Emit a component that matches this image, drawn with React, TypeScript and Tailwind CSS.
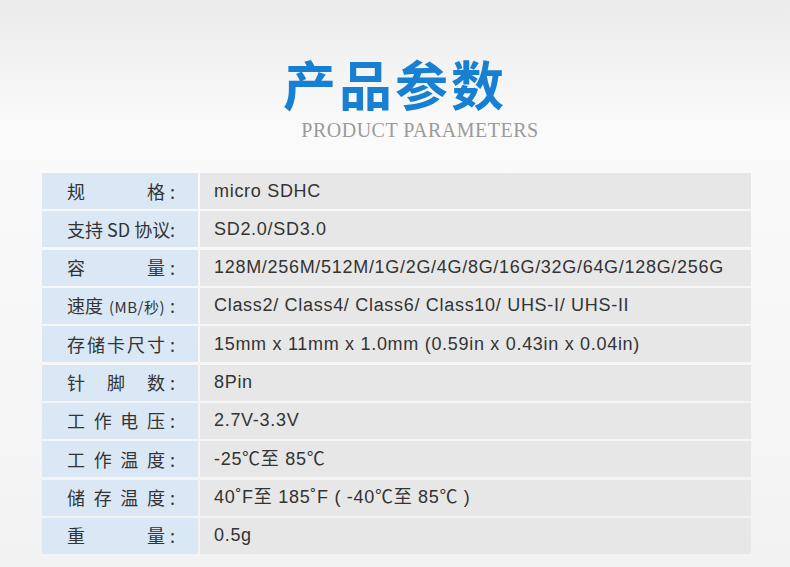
import React from 'react';

const rows: { label: React.ReactNode[]; value: string }[] = [
  { label: ['规', '格'], value: 'micro SDHC' },
  { label: ['支持 SD 协议'], value: 'SD2.0/SD3.0' },
  { label: ['容', '量'], value: '128M/256M/512M/1G/2G/4G/8G/16G/32G/64G/128G/256G' },
  {
    label: ['速度', <span key="s" className="text-[15px] tracking-[0.5px]">(MB/秒)</span>],
    value: 'Class2/ Class4/ Class6/ Class10/ UHS-I/ UHS-II',
  },
  { label: ['存', '储', '卡', '尺', '寸'], value: '15mm x 11mm x 1.0mm (0.59in x 0.43in x 0.04in)' },
  { label: ['针', '脚', '数'], value: '8Pin' },
  { label: ['工', '作', '电', '压'], value: '2.7V-3.3V' },
  { label: ['工', '作', '温', '度'], value: '-25℃至 85℃' },
  { label: ['储', '存', '温', '度'], value: '40˚F至 185˚F ( -40℃至 85℃ )' },
  { label: ['重', '量'], value: '0.5g' },
];

export default function App() {
  return (
    <div className="w-[790px] h-[567px] overflow-hidden bg-[linear-gradient(180deg,#ebebeb_0%,#fafafa_22%,#f7f7f7_60%,#f2f2f2_100%)]">
      <div className="pt-[57px] flex flex-col items-center">
        <h1 className="text-[53px] leading-none font-bold text-[#1780d2] tracking-[3px] font-['Noto_Sans_CJK_SC',sans-serif]">
          产品参数
        </h1>
        <p className="mt-[10px] ml-[50px] text-[20px] leading-none text-[#9b9b9b] tracking-[0.5px] font-['Liberation_Serif',serif]">
          PRODUCT PARAMETERS
        </p>
      </div>

      <div className="ml-[42px] mt-[33px] w-[709px] flex flex-col gap-[2.33px]">
        {rows.map((row, i) => (
          <div key={i} className="flex h-[36px] gap-[2px]">
            <div className="w-[156px] shrink-0 bg-[#dae8f6] flex items-center pl-[25px] text-[18px] text-[#333] whitespace-nowrap font-['Noto_Sans_CJK_SC',sans-serif]">
              <div className="w-[98px] flex items-center justify-between">
                {row.label.map((p, j) => (
                  <span key={j}>{p}</span>
                ))}
              </div>
              <span className="pl-[5px]">:</span>
            </div>
            <div className="flex-1 bg-[#e7e7e7] flex items-center pl-[14px] text-[18px] text-[#333] tracking-[0.7px] whitespace-nowrap font-['Liberation_Sans','Noto_Sans_CJK_SC',sans-serif]">
              {row.value}
            </div>
          </div>
        ))}
      </div>
    </div>
  );
}
